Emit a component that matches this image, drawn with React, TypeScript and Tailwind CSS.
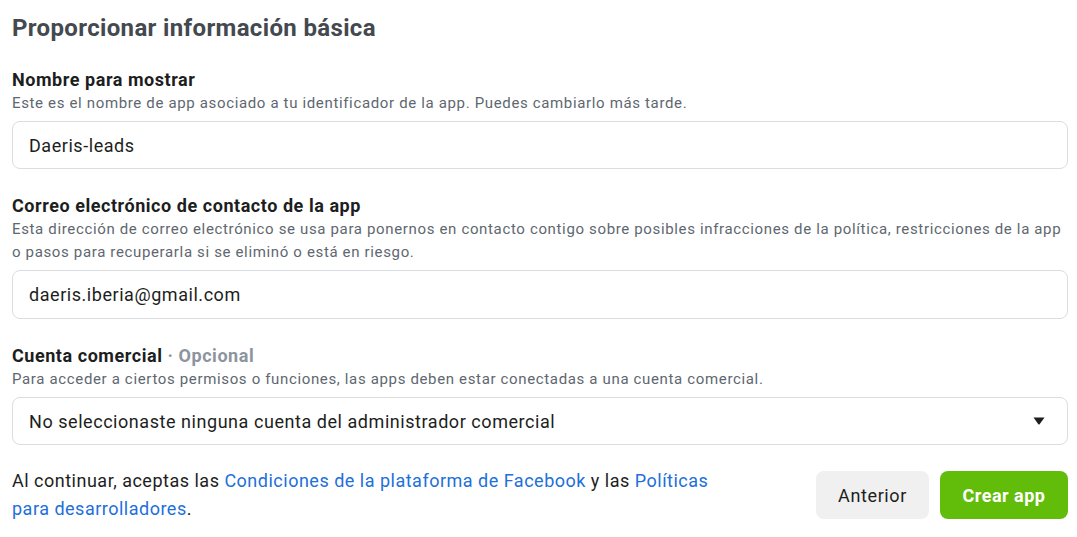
import React from "react";

const Field = ({
  label,
  optional,
  help,
  children,
}: {
  label: string;
  optional?: boolean;
  help: React.ReactNode;
  children: React.ReactNode;
}) => (
  <section className="flex flex-col">
    <h3 className="text-[18px] leading-[22px] font-bold tracking-[0.55px] text-[#1c1e21]">
      {label}
      {optional && <span className="text-[#8d949e]"> · Opcional</span>}
    </h3>
    <p className="mt-[1px] text-[15px] leading-[23px] tracking-[0.65px] text-[#606770]">{help}</p>
    <div className="mt-[6px]">{children}</div>
  </section>
);

const box =
  "rounded-lg border border-[#dadde1] flex items-center text-[18px] tracking-[0.55px] text-[#1c1e21]";

const App = () => {
  return (
    <main
      className="w-full h-[537px] bg-white pl-3 pr-[9px] pt-[14px] flex flex-col"
      style={{ fontFamily: "Roboto, 'Liberation Sans', sans-serif" }}
    >
      <h2 className="text-[24px] leading-[28px] font-bold tracking-[0.35px] text-[#444950]">
        Proporcionar información básica
      </h2>

      <div className="mt-[27px] flex flex-col gap-[26px]">
        <Field
          label="Nombre para mostrar"
          help="Este es el nombre de app asociado a tu identificador de la app. Puedes cambiarlo más tarde."
        >
          <div className={`h-[48px] px-4 ${box}`}>Daeris-leads</div>
        </Field>

        <Field
          label="Correo electrónico de contacto de la app"
          help="Esta dirección de correo electrónico se usa para ponernos en contacto contigo sobre posibles infracciones de la política, restricciones de la app o pasos para recuperarla si se eliminó o está en riesgo."
        >
          <div className={`h-[49px] px-4 ${box}`}>daeris.iberia@gmail.com</div>
        </Field>

        <Field
          optional
          label="Cuenta comercial"
          help="Para acceder a ciertos permisos o funciones, las apps deben estar conectadas a una cuenta comercial."
        >
          <div className={`h-[48px] pl-4 pr-[22px] justify-between ${box}`}>
            <span>No seleccionaste ninguna cuenta del administrador comercial</span>
            <svg width="12" height="8" viewBox="0 0 12 8">
              <path d="M0.5 0.5 H11.5 L6.8 7 Q6 8 5.2 7 Z" fill="#1c1e21" />
            </svg>
          </div>
        </Field>
      </div>

      <footer className="mt-[22px] flex items-start justify-between">
        <p className="w-[730px] text-[18px] leading-[28px] tracking-[0.5px] text-[#1c1e21]">
          Al continuar, aceptas las{" "}
          <a className="text-[#216fdb]">Condiciones de la plataforma de Facebook</a> y las{" "}
          <a className="text-[#216fdb]">Políticas para desarrolladores</a>.
        </p>
        <div className="flex gap-[11px] pt-[4px]">
          <button className="h-[48px] w-[113px] rounded-lg bg-[#f0f0f0] text-[18px] tracking-[0.6px] text-[#1c1e21]">
            Anterior
          </button>
          <button className="h-[48px] w-[128px] rounded-lg bg-[#62bc0a] text-[18px] tracking-[0.5px] font-bold text-white">
            Crear app
          </button>
        </div>
      </footer>
    </main>
  );
};

export default App;
